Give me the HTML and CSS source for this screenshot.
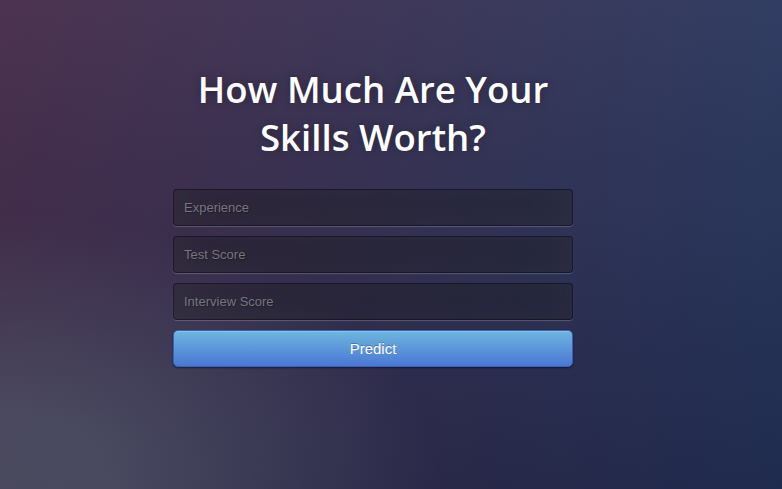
FILE: index.html
```html
<!DOCTYPE html>
<html>
<head>
<meta charset="utf-8">
<title>Predict</title>
<link rel="stylesheet" href="styles.css">
</head>
<body>
<div class="login">
  <h1 class="title">How Much Are Your Skills Worth?</h1>
  <form class="form">
    <input class="field" type="text" placeholder="Experience">
    <input class="field" type="text" placeholder="Test Score">
    <input class="field" type="text" placeholder="Interview Score">
    <button class="btn" type="button">Predict</button>
  </form>
</div>
</body>
</html>
```
FILE: styles.css
```css
html, body {
  margin: 0;
  width: 100%;
  height: 100%;
}
body {
  font-family: "Open Sans", sans-serif;
  background: #182048;
  background:
    radial-gradient(ellipse farthest-corner at 0% 100%, rgba(104,128,138,.4) 10%, rgba(138,114,76,0) 40%),
    linear-gradient(to bottom, rgba(57,173,219,.25) 0%, rgba(42,60,87,.4) 100%),
    linear-gradient(135deg, #520a22 0%, #182048 100%);
  overflow: hidden;
}
.login {
  width: 400px;
  margin-left: calc(50% - 218px);
  padding-top: 65px;
}
.title {
  margin: 0 0 28px;
  color: #fff;
  font-size: 36.6px;
  font-weight: 600;
  line-height: 48px;
  letter-spacing: 0;
  text-align: center;
  text-shadow: 0 0 10px rgba(0,0,0,0.3);
}
.form {
  display: flex;
  flex-direction: column;
  gap: 10px;
}
.field {
  box-sizing: border-box;
  width: 100%;
  height: 37px;
  margin: 0;
  padding: 10px;
  font-family: "Liberation Sans", Arial, sans-serif;
  font-size: 13px;
  color: #fff;
  background: rgba(0,0,0,0.3);
  border: 1px solid rgba(0,0,0,0.3);
  border-radius: 4px;
  outline: none;
  text-shadow: 1px 1px 1px rgba(0,0,0,0.3);
  box-shadow: inset 0 -5px 45px rgba(100,100,100,0.2), 0 1px 1px rgba(255,255,255,0.2);
}
.field::placeholder {
  color: #76767e;
}
.btn {
  box-sizing: border-box;
  width: 100%;
  height: 37px;
  margin: 0;
  padding: 9px 14px;
  font-family: "Liberation Sans", Arial, sans-serif;
  font-size: 15px;
  line-height: normal;
  color: #fff;
  text-shadow: 0 -1px 0 rgba(0,0,0,0.25);
  background-color: #4a77d4;
  background-image: linear-gradient(to bottom, #6eb6de, #4a77d4);
  border: 1px solid #3762bc;
  border-radius: 5px;
  box-shadow: inset 0 1px 0 rgba(255,255,255,0.2), 0 1px 2px rgba(0,0,0,0.5);
  cursor: pointer;
}
```
